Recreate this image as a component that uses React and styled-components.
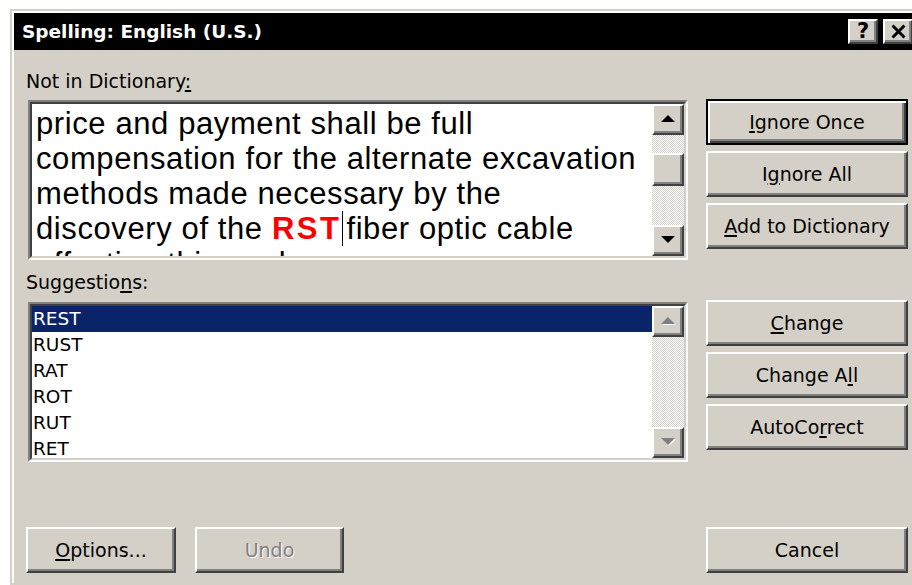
import React from 'react'
import styled, { createGlobalStyle, css } from 'styled-components'

const GlobalStyle = createGlobalStyle`
  html, body {
    margin: 0;
    padding: 0;
    background: #fff;
    overflow: hidden;
  }
  body {
    font-family: "DejaVu Sans", Verdana, sans-serif;
    color: #000;
  }
  u {
    text-decoration-thickness: 1.5px;
    text-underline-offset: 2px;
  }
`

const raised = css`
  box-sizing: border-box;
  background: #d4d0c8;
  border: 2px solid;
  border-color: #fff #404040 #404040 #fff;
  box-shadow: inset -2px -2px #808080;
`

const Window = styled.div`
  margin: 9px 0 0 10px;
  width: 901px;
  height: 568px;
  padding: 2px;
  background: #d4d0c8;
  border: 2px solid #d4d0c8;
  box-shadow: inset 2px 2px #fff;
`

const TitleBar = styled.div`
  height: 37px;
  background: #000;
  display: flex;
  align-items: center;
  gap: 5px;
  padding: 0 2px 0 8px;
`

const Title = styled.div`
  flex: 1;
  color: #fff;
  font-weight: bold;
  font-size: 18.5px;
`

const TitleButton = styled.div`
  ${raised};
  width: 30px;
  height: 25px;
  display: flex;
  align-items: center;
  justify-content: center;
  font-weight: bold;
  font-size: 21px;
  line-height: 1;
`

const Content = styled.div`
  display: grid;
  grid-template-columns: 662px 202px;
  column-gap: 18px;
  align-items: start;
  padding-left: 12px;
`

const FieldLabel = styled.div`
  grid-column: 1;
  margin-top: ${p => p.$top}px;
  height: 24px;
  line-height: 24px;
  font-size: 19px;
`

const Sunken = styled.div`
  grid-column: 1;
  margin: ${p => p.$top}px 0 0 2px;
  height: 160px;
  box-sizing: border-box;
  display: flex;
  background: #fff;
  border: 2px solid;
  border-color: #808080 #fff #fff #808080;
`

const SunkenInner = styled.div`
  flex: 1;
  min-width: 0;
  display: flex;
  border: 2px solid;
  border-color: #404040 #d4d0c8 #d4d0c8 #404040;
`

const DocText = styled.div`
  flex: 1;
  overflow: hidden;
  padding: 2px 0 0 4px;
  font-family: "Liberation Sans", Arial, sans-serif;
  font-size: 31px;
  letter-spacing: 0.6px;
  line-height: 35px;
  white-space: nowrap;
`

const Misspelled = styled.span`
  color: #ff0000;
  font-weight: bold;
  letter-spacing: 2.5px;
`

const Caret = styled.span`
  display: inline-block;
  width: 1px;
  height: 35px;
  margin: 0 3px 0 1px;
  vertical-align: top;
  background: #000;
`

const List = styled.div`
  flex: 1;
  overflow: hidden;
`

const ListRow = styled.div`
  height: 26px;
  line-height: 26px;
  padding-left: 1px;
  font-size: 18.5px;
  background: ${p => (p.$selected ? '#0a246a' : 'transparent')};
  color: ${p => (p.$selected ? '#fff' : '#000')};
`

const ScrollBar = styled.div`
  width: 32px;
  display: flex;
  flex-direction: column;
  background: repeating-conic-gradient(#fff 0% 25%, #d4d0c8 0% 50%) 0 0 / 2px 2px;
`

const ScrollButton = styled.div`
  ${raised};
  height: 31px;
  display: flex;
  align-items: center;
  justify-content: center;
`

const Thumb = styled.div`
  ${raised};
  height: 33px;
  margin-top: ${p => p.$offset}px;
`

const Track = styled.div`
  flex: 1;
`

const ButtonStack = styled.div`
  grid-column: 2;
  margin-top: ${p => p.$top}px;
  display: flex;
  flex-direction: column;
  gap: 6px;
`

const Button = styled.div`
  ${raised};
  width: ${p => (p.$width ? `${p.$width}px` : '100%')};
  height: 46px;
  display: flex;
  align-items: center;
  justify-content: center;
  font-size: 19px;
  ${p => p.$default && css`
    border-color: #000;
    box-shadow: inset 2px 2px #fff, inset -2px -2px #404040, inset -4px -4px #808080;
  `}
  ${p => p.$disabled && css`
    color: #808080;
    text-shadow: 1px 1px #fff;
  `}
`

const BottomLeft = styled.div`
  grid-column: 1;
  margin-top: 65px;
  display: flex;
  gap: 19px;
`

const BottomRight = styled.div`
  grid-column: 2;
  margin-top: 65px;
`

const Arrow = ({ up, disabled }) => {
  const pts = up ? '7,0 14,7 0,7' : '0,0 14,0 7,7'
  return (
    <svg width="15" height="9" viewBox="0 0 15 9">
      {disabled && <polygon points={pts} fill="#fff" transform="translate(1,1)" />}
      <polygon points={pts} fill={disabled ? '#808080' : '#000'} />
    </svg>
  )
}

const CloseGlyph = () => (
  <svg width="15" height="15" viewBox="0 0 15 15">
    <path d="M1.5 1.5 L13.5 13.5 M13.5 1.5 L1.5 13.5" stroke="#000" strokeWidth="3" />
  </svg>
)

const suggestions = ['REST', 'RUST', 'RAT', 'ROT', 'RUT', 'RET']

export default function App() {
  return (
    <>
      <GlobalStyle />
      <Window>
        <TitleBar>
          <Title>Spelling: English (U.S.)</Title>
          <TitleButton>?</TitleButton>
          <TitleButton><CloseGlyph /></TitleButton>
        </TitleBar>
        <Content>
          <FieldLabel $top={19}>Not in Dictionary<u>:</u></FieldLabel>
          <Sunken $top={7}>
            <SunkenInner>
              <DocText>
                <div>price and payment shall be full</div>
                <div>compensation for the alternate excavation</div>
                <div>methods made necessary by the</div>
                <div>
                  discovery of the <Misspelled>RST</Misspelled>
                  <Caret />fiber optic cable
                </div>
                <div>affecting this work.</div>
              </DocText>
              <ScrollBar>
                <ScrollButton><Arrow up /></ScrollButton>
                <Thumb $offset={18} />
                <Track />
                <ScrollButton><Arrow /></ScrollButton>
              </ScrollBar>
            </SunkenInner>
          </Sunken>
          <ButtonStack $top={6}>
            <Button $default><span><u>I</u>gnore Once</span></Button>
            <Button><span>I<u>g</u>nore All</span></Button>
            <Button><span><u>A</u>dd to Dictionary</span></Button>
          </ButtonStack>

          <FieldLabel $top={10}>Suggestio<u>n</u>s:</FieldLabel>
          <Sunken $top={8}>
            <SunkenInner>
              <List>
                {suggestions.map((word, i) => (
                  <ListRow key={word} $selected={i === 0}>{word}</ListRow>
                ))}
              </List>
              <ScrollBar>
                <ScrollButton><Arrow up disabled /></ScrollButton>
                <Track />
                <ScrollButton><Arrow disabled /></ScrollButton>
              </ScrollBar>
            </SunkenInner>
          </Sunken>
          <ButtonStack $top={6}>
            <Button><span><u>C</u>hange</span></Button>
            <Button><span>Change A<u>l</u>l</span></Button>
            <Button><span>AutoCo<u>r</u>rect</span></Button>
          </ButtonStack>

          <BottomLeft>
            <Button $width={150}><span><u>O</u>ptions...</span></Button>
            <Button $width={149} $disabled>Undo</Button>
          </BottomLeft>
          <BottomRight>
            <Button>Cancel</Button>
          </BottomRight>
        </Content>
      </Window>
    </>
  )
}
